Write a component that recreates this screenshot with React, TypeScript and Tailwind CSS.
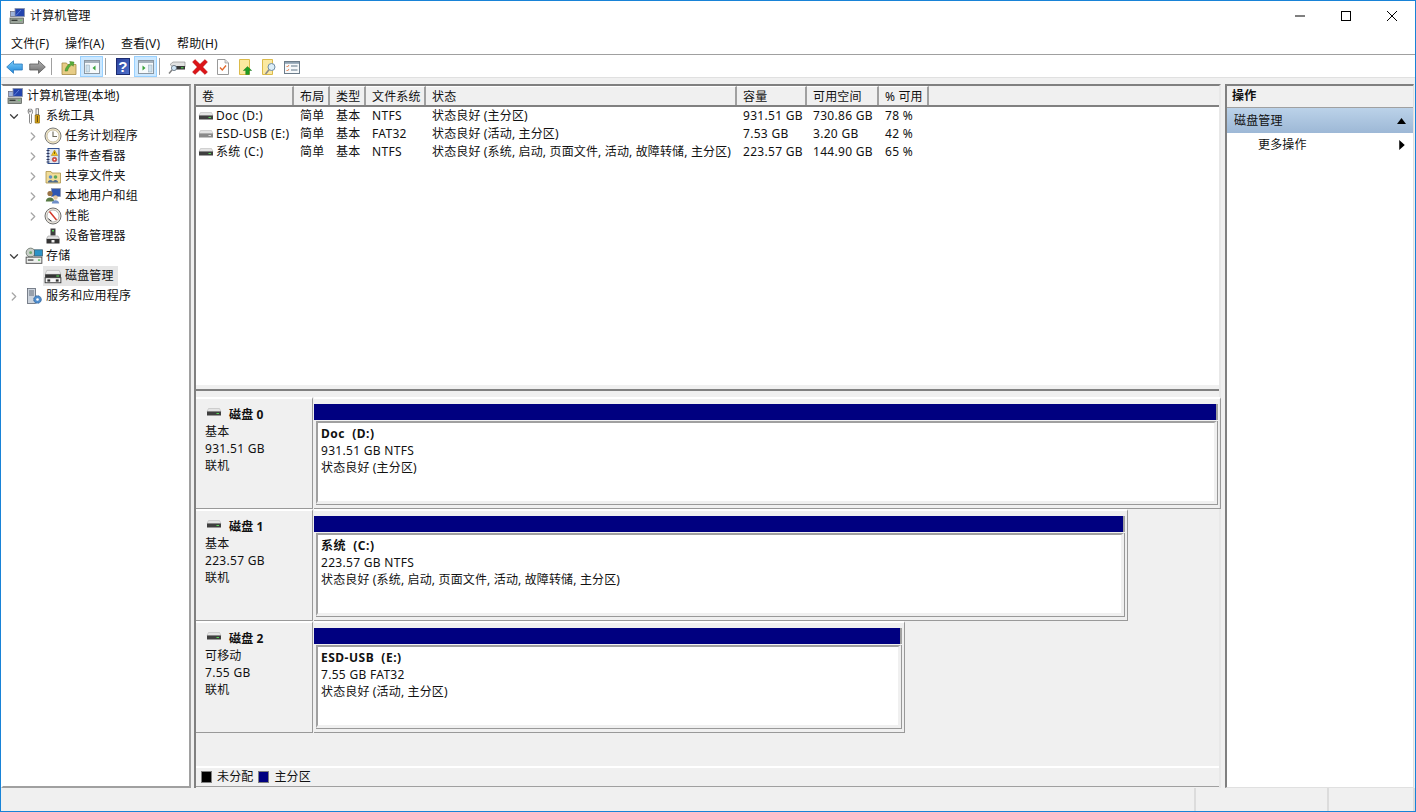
import type { ReactNode } from 'react';
import { ChevronDown, ChevronRight } from 'lucide-react';

const FONT = "font-['Noto_Sans','Noto_Sans_CJK_SC',sans-serif]";

// --- small icons, all drawn on a 16 grid ---
function Ico({ children, size = 16 }: { children: ReactNode; size?: number }) {
  return (
    <svg width={size} height={size} viewBox="0 0 16 16" className="shrink-0">
      {children}
    </svg>
  );
}

function DriveIcon({ light = false }: { light?: boolean }) {
  return (
    <Ico>
      <path d="M2.5 4.5h11l1.5 3H1z" fill="#e4e4e4" stroke="#b0b0b0" strokeWidth="0.5" />
      <rect x="1" y="7.5" width="14" height="4" fill={light ? '#8a8a8a' : '#3f3f3f'} />
      <rect x="10.5" y="9" width="2.5" height="1" fill={light ? '#ddd' : '#56d656'} />
    </Ico>
  );
}

function ComputerIcon() {
  return (
    <Ico>
      <rect x="1.5" y="3.5" width="6" height="5" fill="#9fb3d9" stroke="#667" strokeWidth="0.7" />
      <rect x="6" y="0.5" width="9.5" height="8" fill="#2344ad" stroke="#8a93a8" strokeWidth="0.8" />
      <path d="M7 7.5l5-5.5" stroke="#5f80dc" strokeWidth="1" />
      <rect x="1" y="10" width="13.5" height="5.5" fill="#9aa39a" stroke="#4f544f" strokeWidth="0.7" />
      <rect x="2.5" y="11.7" width="6" height="1.2" fill="#2e3330" />
      <rect x="11" y="11.7" width="1.8" height="1.2" fill="#6fc46f" />
    </Ico>
  );
}

function ToolsIcon() {
  return (
    <Ico>
      <path d="M3 0.8v3h2v-3c2 1 2 4.500 0.500 5.500V14.500a1 1 0 0 1-2 0V6.300C2 5.300 1.500 2 3 0.800z" fill="#fff" stroke="#6b6b6b" strokeWidth="0.8" />
      <rect x="10" y="0.800" width="2.600" height="6" fill="#f4f4f4" stroke="#6b6b6b" strokeWidth="0.8" />
      <path d="M9.200 7h4.200v8h-4.200z" fill="#e7ad13" stroke="#7d5c08" strokeWidth="0.7" />
      <path d="M11.300 8v6" stroke="#3b2c06" strokeWidth="0.9" />
    </Ico>
  );
}

function ClockIcon() {
  return (
    <svg width="18" height="18" viewBox="0 0 18 18" className="shrink-0">
      <circle cx="9" cy="9" r="8" fill="#efe6c8" stroke="#7b7b7b" />
      <circle cx="9" cy="9" r="6" fill="#fdfdfd" stroke="#b9ae8d" strokeWidth="0.7" />
      <path d="M9 4.500V9.500H13" fill="none" stroke="#6d6a5c" strokeWidth="1.1" />
    </svg>
  );
}

function EventIcon() {
  return (
    <Ico>
      <rect x="3" y="0.500" width="11" height="15" fill="#dee5f1" stroke="#2f4f8f" />
      <path d="M1.500 2.500h3M1.500 5.500h3M1.500 8.500h3M1.500 11.500h3M1.500 14h3" stroke="#30385a" strokeWidth="1" />
      <path d="M9.500 2l3.200 5.500h-6.400z" fill="#f2c21e" stroke="#a5800a" strokeWidth="0.5" />
      <rect x="9.100" y="3.700" width="0.800" height="2.200" fill="#5a4500" />
      <circle cx="9.500" cy="11.500" r="2.300" fill="#dc4a40" stroke="#962a24" strokeWidth="0.4" />
      <circle cx="9.500" cy="11.500" r="0.800" fill="#fff" />
    </Ico>
  );
}

function ShareIcon() {
  return (
    <Ico>
      <path d="M1 3.500h5l1 1.500h8.500v10H1z" fill="#f0dc98" stroke="#ad9346" strokeWidth="0.8" />
      <circle cx="5.500" cy="9" r="1.800" fill="#5f90c9" />
      <circle cx="10.500" cy="9" r="1.800" fill="#5ea858" />
      <path d="M2.800 14.500c0-3.500 5.400-3.500 5.400 0zM7.800 14.500c0-3.500 5.400-3.500 5.400 0z" fill="#4d6a8e" />
    </Ico>
  );
}

function UsersIcon() {
  return (
    <Ico>
      <rect x="6.500" y="0.500" width="9" height="8" fill="#2f56b2" stroke="#8d93a5" strokeWidth="0.7" />
      <circle cx="5" cy="5.500" r="2.600" fill="#9a7346" />
      <path d="M0.800 13.500c0-5.500 8.400-5.500 8.400 0z" fill="#577a45" />
      <circle cx="10.500" cy="9.500" r="2.200" fill="#e4c7a0" />
      <path d="M6.800 15.500c0-4.500 7.400-4.500 7.400 0z" fill="#6f8fc9" />
    </Ico>
  );
}

function PerfIcon() {
  return (
    <svg width="18" height="18" viewBox="0 0 18 18" className="shrink-0">
      <circle cx="9" cy="9" r="8" fill="#efeadf" stroke="#6f6f6f" />
      <circle cx="9" cy="9" r="6" fill="#fff" stroke="#9a9a9a" strokeWidth="0.7" />
      <path d="M5.500 4.500l7 8.500" stroke="#d3382a" strokeWidth="1.5" />
      <path d="M4.500 11.500a5 5 0 0 0 3 2.500" stroke="#3c3c3c" strokeWidth="1" fill="none" />
    </svg>
  );
}

function DeviceIcon() {
  return (
    <Ico>
      <rect x="5.500" y="0.500" width="5" height="7" fill="#3e3e3e" />
      <rect x="7" y="2" width="2" height="1.500" fill="#56d656" />
      <path d="M3 8h10l1.500 3h-13z" fill="#e2e2e2" stroke="#8a8a8a" strokeWidth="0.5" />
      <rect x="1.500" y="11" width="13" height="4.500" fill="#333" />
      <rect x="6.500" y="12" width="3" height="2.500" fill="#f2f2f2" />
    </Ico>
  );
}

function StorageIcon() {
  return (
    <svg width="18" height="18" viewBox="0 0 16 16" className="shrink-0">
      <ellipse cx="5" cy="5" rx="4" ry="4" fill="#c9cfc9" stroke="#5f6a5f" strokeWidth="0.7" />
      <circle cx="5" cy="5" r="1.300" fill="#6fa96f" />
      <rect x="8.500" y="2.500" width="7" height="5.500" fill="#2c93c6" stroke="#3d5f72" strokeWidth="0.7" />
      <rect x="1" y="9" width="14" height="5.500" fill="#eef0ee" stroke="#4a4a4a" strokeWidth="0.8" />
      <rect x="2.500" y="11" width="5" height="1.200" fill="#4a4a4a" />
      <rect x="11.500" y="11" width="2" height="1.200" fill="#56b456" />
    </svg>
  );
}

function DiskMgmtIcon() {
  return (
    <svg width="18" height="18" viewBox="0 0 16 16" className="shrink-0">
      <path d="M2.500 3h11l1.500 3.500H1z" fill="#efefef" stroke="#a6a6a6" strokeWidth="0.5" />
      <rect x="1" y="6.500" width="14" height="3" fill="#333" />
      <rect x="11" y="7.500" width="2.500" height="1" fill="#56d656" />
      <rect x="1" y="9.500" width="14" height="4.500" fill="#f7f7f7" stroke="#333" strokeWidth="0.8" />
      <rect x="3" y="11" width="2.500" height="2" fill="#333" />
      <rect x="10.500" y="11" width="2.500" height="2" fill="#333" />
    </svg>
  );
}

function ServicesIcon() {
  return (
    <Ico>
      <rect x="1.500" y="0.500" width="8" height="15" fill="#ccd3dc" stroke="#5f6773" strokeWidth="0.8" />
      <path d="M3 3h5M3 5h5M3 7h5" stroke="#4c5563" strokeWidth="0.8" />
      <circle cx="11.500" cy="11.500" r="3.800" fill="#4f8dcd" stroke="#2a5a90" strokeWidth="0.8" strokeDasharray="1.400 0.600" />
      <circle cx="11.500" cy="11.500" r="1.300" fill="#fff" />
    </Ico>
  );
}

function BackIcon() {
  return (
    <svg width="17" height="14" viewBox="0 0 17 14" className="shrink-0">
      <defs>
        <linearGradient id="backGrad" x1="0" y1="0" x2="0" y2="1">
          <stop offset="0" stopColor="#7fd0fb" />
          <stop offset="1" stopColor="#1e85d8" />
        </linearGradient>
      </defs>
      <path d="M0.700 7L7.500 0.700V4h8.800v6H7.500v3.300z" fill="url(#backGrad)" stroke="#2a79bd" strokeWidth="0.8" />
    </svg>
  );
}

function ForwardIcon() {
  return (
    <svg width="17" height="14" viewBox="0 0 17 14" className="shrink-0">
      <defs>
        <linearGradient id="fwdGrad" x1="0" y1="0" x2="0" y2="1">
          <stop offset="0" stopColor="#b4b4b4" />
          <stop offset="1" stopColor="#6d6d6d" />
        </linearGradient>
      </defs>
      <path d="M16.300 7L9.500 0.700V4H0.700v6h8.800v3.300z" fill="url(#fwdGrad)" stroke="#5c5c5c" strokeWidth="0.8" />
    </svg>
  );
}

function UpFolderIcon() {
  return (
    <Ico>
      <path d="M1 4h4.500l1 1.500h8.500v10H1z" fill="#e7cc85" stroke="#a48a44" strokeWidth="0.8" />
      <path d="M4 12c.5-4 3-6.500 5.500-7.500L8.700 2.500l4.300.6-.8 4.200-1.200-1.500C9 7 7 9 6.500 12z" fill="#58b03a" stroke="#3a7c20" strokeWidth="0.5" />
    </Ico>
  );
}

function PaneIcon({ side }: { side: 'left' | 'right' }) {
  return (
    <Ico>
      <rect x="0.500" y="1.500" width="15" height="13" fill="#f7fafc" stroke="#8a97a2" />
      <rect x="1" y="2" width="14" height="2" fill="#a7b3bd" />
      {side === 'left' ? (
        <>
          <rect x="2" y="6" width="3.500" height="7" fill="#cfe2ee" stroke="#8fa6b3" strokeWidth="0.5" />
          <path d="M11.500 6.500v5L8.500 9z" fill="#39a339" />
        </>
      ) : (
        <>
          <rect x="10.500" y="6" width="3.500" height="7" fill="#cfe2ee" stroke="#8fa6b3" strokeWidth="0.5" />
          <path d="M4.500 6.500v5L7.500 9z" fill="#39a339" />
        </>
      )}
    </Ico>
  );
}

function HelpIcon() {
  return (
    <svg width="14" height="17" viewBox="0 0 14 17" className="shrink-0">
      <defs>
        <linearGradient id="helpGrad" x1="0" y1="0" x2="1" y2="1">
          <stop offset="0" stopColor="#2a3f9a" />
          <stop offset="1" stopColor="#4f72cc" />
        </linearGradient>
      </defs>
      <rect x="0.500" y="0.500" width="13" height="16" fill="url(#helpGrad)" stroke="#1b2b70" />
      <text x="7" y="14" textAnchor="middle" fontSize="15" fontWeight="700" fill="#fff" fontFamily="Liberation Sans">?</text>
    </svg>
  );
}

function ConnectIcon() {
  return (
    <svg width="18" height="16" viewBox="0 0 18 16" className="shrink-0">
      <path d="M2 5.500l3-2.500h12v5H5z" fill="#e2e2e2" stroke="#808080" strokeWidth="0.6" />
      <rect x="5" y="7" width="12" height="3.500" fill="#353535" />
      <rect x="13" y="8.200" width="2.500" height="1.100" fill="#56d656" />
      <circle cx="6" cy="9" r="2.600" fill="#cfe4f4" stroke="#5f6c78" strokeWidth="0.8" />
      <path d="M4 11L1 14.500" stroke="#808080" strokeWidth="1.500" />
    </svg>
  );
}

function DeleteIcon() {
  return (
    <Ico>
      <path d="M0.500 3L3 0.500l5 4.700 5-4.700L15.500 3l-4.700 5 4.700 5-2.500 2.500-5-4.700-5 4.700L0.500 13l4.700-5z" fill="#dc1418" stroke="#a80e10" strokeWidth="0.4" />
    </Ico>
  );
}

function PropsIcon() {
  return (
    <Ico>
      <path d="M2.500 0.500h7.500l3.500 3.500v11.500h-11z" fill="#fff" stroke="#9a9a9a" />
      <path d="M10 0.500V4h3.500" fill="#e0e0e0" stroke="#9a9a9a" strokeWidth="0.7" />
      <path d="M5 8.500l2.300 2.500L11 6.500" fill="none" stroke="#e2672a" strokeWidth="1.300" />
    </Ico>
  );
}

function ExportIcon() {
  return (
    <Ico>
      <path d="M1.500 0.500h10v15h-10z" fill="#fbe9a0" stroke="#dcbb4a" />
      <path d="M9.500 7.500l4.200 4h-2.400v4H7.700v-4H5.300z" fill="#1f9d22" stroke="#15701a" strokeWidth="0.4" />
    </Ico>
  );
}

function FindIcon() {
  return (
    <Ico>
      <path d="M1.500 0.500h10v15h-10z" fill="#fbe9a0" stroke="#dcbb4a" />
      <circle cx="10.500" cy="8" r="3.500" fill="#dceef9" stroke="#6f8da6" />
      <path d="M8 10.800L4.500 15" stroke="#8b8b8b" strokeWidth="1.600" />
    </Ico>
  );
}

function ListIcon() {
  return (
    <Ico>
      <rect x="0.500" y="2.500" width="15" height="12" fill="#f6f9fb" stroke="#6c7c8a" />
      <rect x="1" y="3" width="14" height="1.800" fill="#8ea2b2" />
      <path d="M2.500 7l1 1 1.500-2M2.500 11l1 1 1.500-2" fill="none" stroke="#e2672a" strokeWidth="0.8" />
      <path d="M7 7h6.500M7 11h6.500" stroke="#5e7486" strokeWidth="1" />
    </Ico>
  );
}

// --- toolbar ---
function ToolBtn({ children, active = false }: { children: ReactNode; active?: boolean }) {
  return (
    <button
      className={
        active
          ? 'w-[23px] h-[21px] flex items-center justify-center bg-[#cce8ff] border border-[#99d1ff]'
          : 'w-[23px] h-[21px] flex items-center justify-center'
      }
    >
      {children}
    </button>
  );
}

function Sep() {
  return <div className="w-px h-[17px] bg-[#a0a0a0] ml-[2px] mr-[5px]" />;
}

// --- tree ---
type TreeItem = { label: string; icon: ReactNode; depth: number; arrow?: 'open' | 'closed'; selected?: boolean };

const treeItems: TreeItem[] = [
  { label: '系统工具', icon: <ToolsIcon />, depth: 1, arrow: 'open' },
  { label: '任务计划程序', icon: <ClockIcon />, depth: 2, arrow: 'closed' },
  { label: '事件查看器', icon: <EventIcon />, depth: 2, arrow: 'closed' },
  { label: '共享文件夹', icon: <ShareIcon />, depth: 2, arrow: 'closed' },
  { label: '本地用户和组', icon: <UsersIcon />, depth: 2, arrow: 'closed' },
  { label: '性能', icon: <PerfIcon />, depth: 2, arrow: 'closed' },
  { label: '设备管理器', icon: <DeviceIcon />, depth: 2 },
  { label: '存储', icon: <StorageIcon />, depth: 1, arrow: 'open' },
  { label: '磁盘管理', icon: <DiskMgmtIcon />, depth: 2, selected: true },
  { label: '服务和应用程序', icon: <ServicesIcon />, depth: 1, arrow: 'closed' },
];

function TreeRow({ item }: { item: TreeItem }) {
  return (
    <div className="h-5 flex items-center">
      <div className={item.depth === 1 ? 'w-[4px] shrink-0' : 'w-[23px] shrink-0'} />
      <div className="w-[14px] shrink-0 flex items-center justify-center">
        {item.arrow === 'open' && <ChevronDown size={15} strokeWidth={2.2} className="text-[#404040]" />}
        {item.arrow === 'closed' && <ChevronRight size={15} strokeWidth={2.2} className="text-[#a6a6a6]" />}
      </div>
      <div className="w-[4px] shrink-0" />
      <div className={item.selected ? 'flex items-center bg-[#e5e5e5] h-[20px] -ml-px pl-[2px] pr-[4px]' : 'flex items-center pl-px'}>
        <div className="w-4 flex items-center justify-center mr-[4px]">{item.icon}</div>
        <span>{item.label}</span>
      </div>
    </div>
  );
}

// --- volume list ---
const colsClass = 'grid grid-cols-[98px_36px_36px_60px_311px_70px_72px_50px_1fr]';

const headers = ['卷', '布局', '类型', '文件系统', '状态', '容量', '可用空间', '% 可用', ''];

const volumes = [
  { name: 'Doc (D:)', layout: '简单', type: '基本', fs: 'NTFS', status: '状态良好 (主分区)', cap: '931.51 GB', free: '730.86 GB', pct: '78 %' },
  { name: 'ESD-USB (E:)', layout: '简单', type: '基本', fs: 'FAT32', status: '状态良好 (活动, 主分区)', cap: '7.53 GB', free: '3.20 GB', pct: '42 %', light: true },
  { name: '系统 (C:)', layout: '简单', type: '基本', fs: 'NTFS', status: '状态良好 (系统, 启动, 页面文件, 活动, 故障转储, 主分区)', cap: '223.57 GB', free: '144.90 GB', pct: '65 %' },
];

// --- disk map ---
const disks = [
  { id: '磁盘 0', kind: '基本', size: '931.51 GB', width: 'w-[907px]', part: 'Doc  (D:)', info: '931.51 GB NTFS', status: '状态良好 (主分区)' },
  { id: '磁盘 1', kind: '基本', size: '223.57 GB', width: 'w-[814px]', part: '系统  (C:)', info: '223.57 GB NTFS', status: '状态良好 (系统, 启动, 页面文件, 活动, 故障转储, 主分区)' },
  { id: '磁盘 2', kind: '可移动', size: '7.55 GB', width: 'w-[591px]', part: 'ESD-USB  (E:)', info: '7.55 GB FAT32', status: '状态良好 (活动, 主分区)' },
];

function DiskRow({ disk }: { disk: (typeof disks)[number] }) {
  return (
    <div className="h-[112px] flex">
      <div className="w-[117px] shrink-0 bg-[#f0f0f0] border-t-2 border-t-white border-r border-b border-r-[#999999] border-b-[#999999] pl-[9px] pt-[7px]">
        <div className="flex items-center h-[17px] font-bold">
          <div className="mb-[6px] ml-px mr-[7px]">
            <DriveIcon />
          </div>
          <span>{disk.id}</span>
        </div>
        <div className="h-[17px] leading-[17px]">{disk.kind}</div>
        <div className="h-[17px] leading-[17px] tracking-[0.3px]">{disk.size}</div>
        <div className="h-[17px] leading-[17px]">联机</div>
      </div>
      <div className="flex-1 min-w-0 pl-px">
        <div className={`${disk.width} h-[112px] border-t-2 border-t-white border-r border-b border-r-[#999999] border-b-[#999999] pt-[5px] pr-[2px]`}>
          <div className="h-4 bg-[#000080] border-r-2 border-r-[#a0a0a0]" />
          <div className="h-[84px] ml-[2px] mt-px border-r border-b border-[#999999]">
            <div className="h-full whitespace-pre bg-white border-t-2 border-l-2 border-t-[#a0a0a0] border-l-[#a0a0a0] border-r-[3px] border-b-[3px] border-r-[#f0f0f0] border-b-[#f0f0f0] pl-[3px] pt-[2px]">
              <div className="h-[17px] leading-[17px] font-bold tracking-[0.5px]">{disk.part}</div>
              <div className="h-[17px] leading-[17px] tracking-[0.3px]">{disk.info}</div>
              <div className="h-[17px] leading-[17px]">{disk.status}</div>
            </div>
          </div>
        </div>
      </div>
    </div>
  );
}

export default function App() {
  return (
    <div className={`${FONT} text-xs tracking-[0.15px] text-[#111111] w-[1416px] h-[812px] overflow-hidden flex flex-col bg-[#f0f0f0] border border-[#1883d7]`}>
      {/* Title bar */}
      <div className="h-[29px] shrink-0 bg-white flex items-center pl-[8px]">
        <ComputerIcon />
        <span className="ml-[5px]">计算机管理</span>
        <div className="ml-auto flex items-center h-full text-black">
          <div className="w-[46px] flex justify-center">
            <svg width="10" height="10" viewBox="0 0 10 10"><path d="M0 5h10" stroke="#000" /></svg>
          </div>
          <div className="w-[46px] flex justify-center">
            <svg width="10" height="10" viewBox="0 0 10 10"><rect x="0.5" y="0.5" width="9" height="9" fill="none" stroke="#000" /></svg>
          </div>
          <div className="w-[46px] flex justify-center">
            <svg width="10" height="10" viewBox="0 0 10 10"><path d="M0 0l10 10M10 0L0 10" stroke="#000" /></svg>
          </div>
        </div>
      </div>

      {/* Menu */}
      <div className="h-[25px] shrink-0 bg-white border-b border-[#a0a0a0] flex items-center pl-[10px] pt-[4px]">
        <span className="w-[54px]">文件(F)</span>
        <span className="w-[56px]">操作(A)</span>
        <span className="w-[56px]">查看(V)</span>
        <span className="w-[56px]">帮助(H)</span>
      </div>

      {/* Toolbar */}
      <div className="h-[23px] shrink-0 bg-white border-b border-[#e0e0e0] flex items-center pl-[2px] pt-px">
        <ToolBtn><BackIcon /></ToolBtn>
        <ToolBtn><ForwardIcon /></ToolBtn>
        <Sep />
        <ToolBtn><UpFolderIcon /></ToolBtn>
        <ToolBtn active><PaneIcon side="left" /></ToolBtn>
        <Sep />
        <ToolBtn><HelpIcon /></ToolBtn>
        <ToolBtn active><PaneIcon side="right" /></ToolBtn>
        <Sep />
        <ToolBtn><ConnectIcon /></ToolBtn>
        <ToolBtn><DeleteIcon /></ToolBtn>
        <ToolBtn><PropsIcon /></ToolBtn>
        <ToolBtn><ExportIcon /></ToolBtn>
        <ToolBtn><FindIcon /></ToolBtn>
        <ToolBtn><ListIcon /></ToolBtn>
      </div>

      {/* Body */}
      <div className="flex-1 min-h-0 flex pt-[6px] pr-px">
        {/* Tree */}
        <div className="w-[190px] shrink-0 h-[704px] bg-white border-2 border-t-[#808080] border-l-white border-r-[#a0a0a0] border-b-[#a0a0a0]">
          <div className="h-5 flex items-center pl-[4px] gap-[4px]">
            <ComputerIcon />
            <span>计算机管理(本地)</span>
          </div>
          {treeItems.map((item) => (
            <TreeRow key={item.label} item={item} />
          ))}
        </div>

        {/* Center */}
        <div className="w-[1027px] ml-[3px] mr-[4px] shrink-0 h-[704px] flex flex-col border-l-2 border-t-2 border-[#808080] border-r-2 border-r-[#e8e8e8]">
          {/* List */}
          <div className="h-[305px] shrink-0 bg-white flex flex-col border-b-2 border-b-[#808080]">
            <div className={`${colsClass} h-[21px] shrink-0 bg-[#f0f0f0] border-b-2 border-b-[#808080]`}>
              {headers.map((h, i) => (
                <div key={i} className={i === 8 ? 'flex items-center' : 'border-r-2 border-r-[#a0a0a0] border-t border-t-white flex items-center pl-[6px] pt-[2px] whitespace-nowrap'}>
                  {h}
                </div>
              ))}
            </div>
            <div className="flex-1 border-b-4 border-b-[#f0f0f0]">
              {volumes.map((v) => (
                <div key={v.name} className={`${colsClass} h-[18px] items-center whitespace-nowrap`}>
                  <div className="flex items-center gap-[2px] pl-[2px]">
                    <DriveIcon light={v.light} />
                    <span className="tracking-[0.35px]">{v.name}</span>
                  </div>
                  <div className="pl-[6px]">{v.layout}</div>
                  <div className="pl-[6px]">{v.type}</div>
                  <div className="pl-[6px] tracking-[0.3px]">{v.fs}</div>
                  <div className="pl-[6px]">{v.status}</div>
                  <div className="pl-[6px] tracking-[0.3px]">{v.cap}</div>
                  <div className="pl-[6px] tracking-[0.3px]">{v.free}</div>
                  <div className="pl-[6px] tracking-[0.3px]">{v.pct}</div>
                  <div />
                </div>
              ))}
            </div>
          </div>

          {/* Disks */}
          <div className="flex-1 min-h-0 flex flex-col bg-[#f0f0f0] pt-[6px]">
            {disks.map((d) => (
              <DiskRow key={d.id} disk={d} />
            ))}
            <div className="mt-auto mb-px h-[21px] flex items-center gap-[5px] pl-[5px] border-t-2 border-t-white border-b border-b-[#a0a0a0]">
              <div className="w-[11px] h-3 bg-black border border-[#808080]" />
              <span>未分配</span>
              <div className="w-[11px] h-3 bg-[#000080] border border-[#808080]" />
              <span>主分区</span>
            </div>
          </div>
        </div>

        {/* Actions */}
        <div className="flex-1 min-w-0 h-[704px] bg-white border-l-2 border-t-2 border-[#808080] border-r border-r-[#e0e0e0] border-b border-b-[#e0e0e0]">
          <div className="h-[22px] bg-[#f0f0f0] border-b border-b-[#a0a0a0] flex items-center pl-[5px] pb-px font-bold">操作</div>
          <div className="h-[25px] bg-gradient-to-b from-[#bbd2e9] to-[#9db8d6] flex items-center pl-[7px] pr-[5px]">
            <span>磁盘管理</span>
            <svg width="9" height="6" viewBox="0 0 9 6" className="ml-auto mr-[2px]"><path d="M0 6L4.500 0 9 6z" fill="#000" /></svg>
          </div>
          <div className="h-[23px] flex items-center pl-[31px] pr-[8px]">
            <span>更多操作</span>
            <svg width="6" height="10" viewBox="0 0 5 9" className="ml-auto"><path d="M0 0l5 4.500L0 9z" fill="#000" /></svg>
          </div>
        </div>
      </div>

      {/* Status bar */}
      <div className="h-[23px] shrink-0 flex justify-end bg-[#f0f0f0]">
        <div className="w-[133px] border-l-2 border-l-[#dcdcdc]" />
        <div className="w-[88px] border-l-2 border-l-[#dcdcdc] border-r-2 border-r-[#dcdcdc]" />
      </div>
    </div>
  );
}
